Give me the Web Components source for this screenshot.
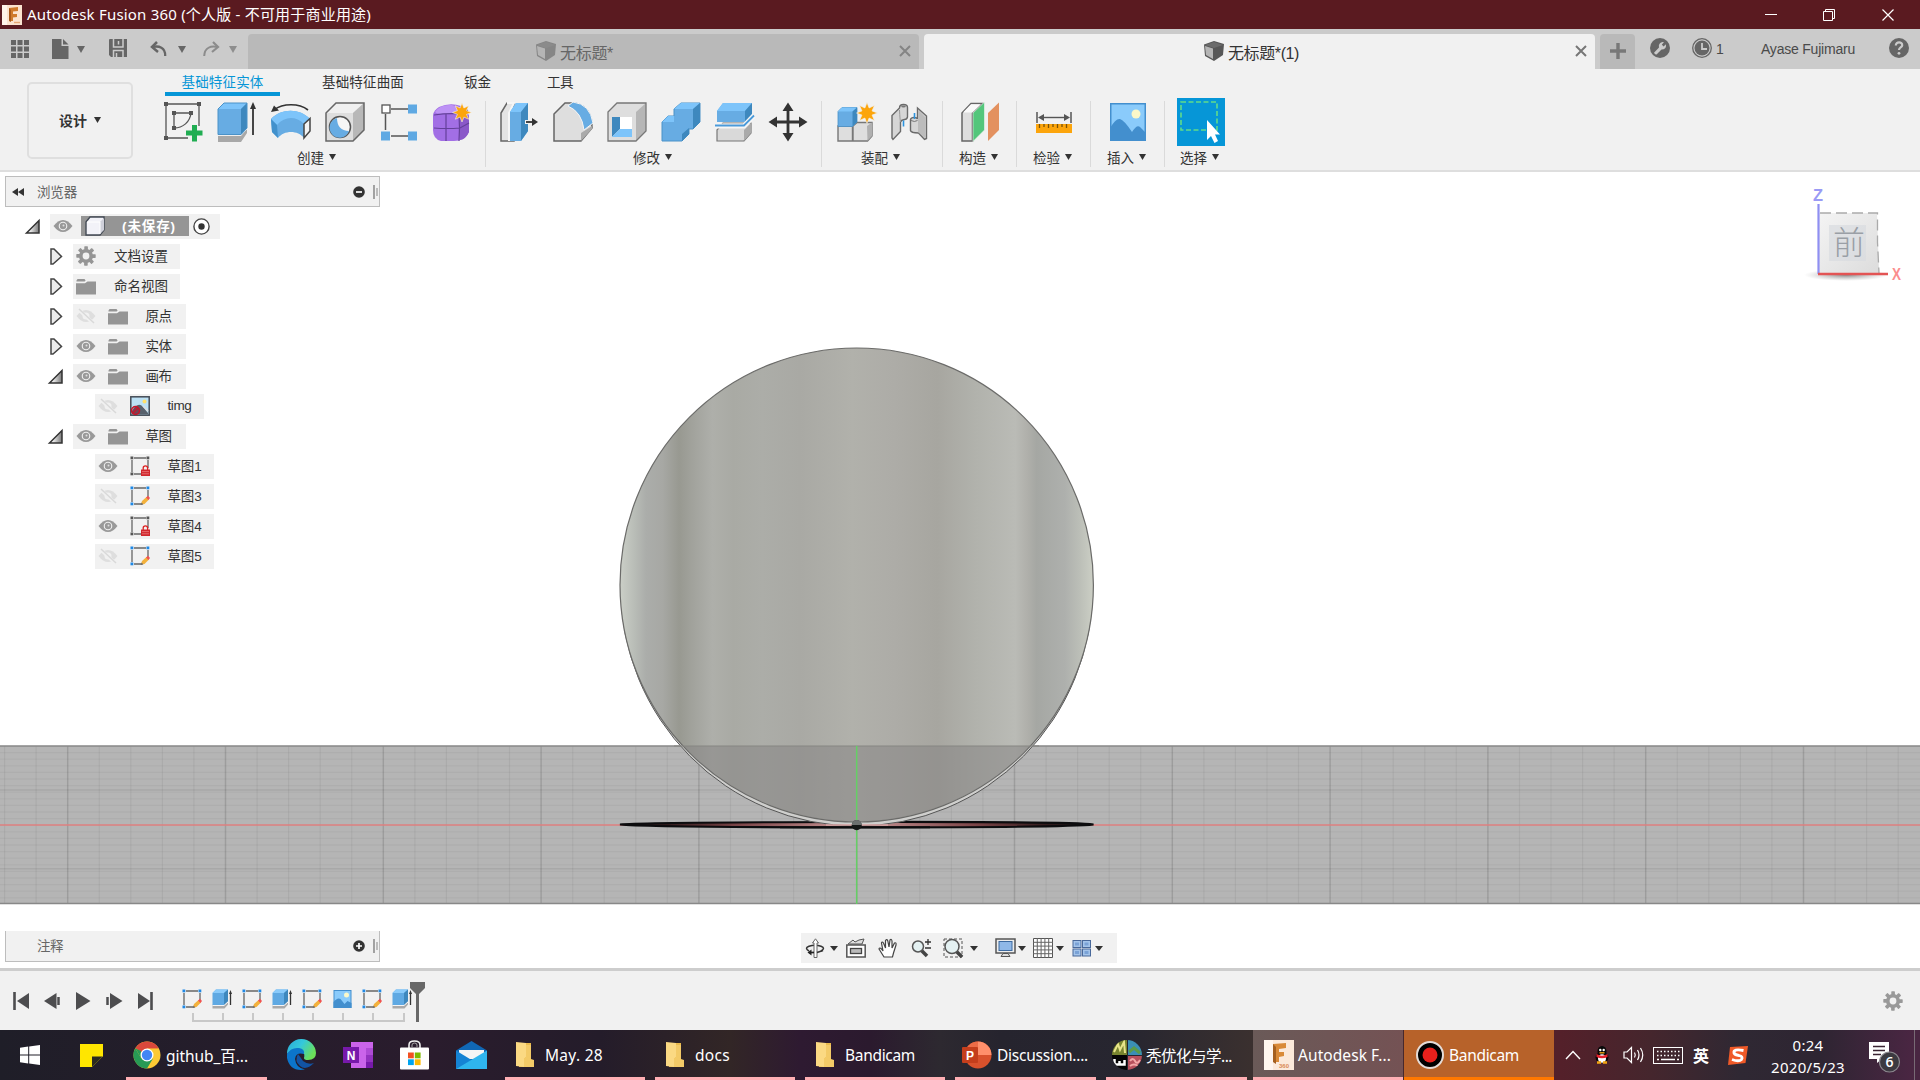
<!DOCTYPE html>
<html lang="zh-CN">
<head>
<meta charset="utf-8">
<title>Autodesk Fusion 360</title>
<style>
html,body{margin:0;padding:0;width:1920px;height:1080px;overflow:hidden;background:#fff}
body{font-family:"Liberation Sans","Noto Sans CJK SC",sans-serif;font-size:14px;color:#333}
</style>
</head>
<body>
<fusion-app></fusion-app>
<script>
const K='#333', G='#666';
const sketch=(c,extra)=>`<path d="M4 2H16M2 4V16M4 18H11M18 4V12" stroke="#666" stroke-width="1.300" fill="none"/><g fill="${c}"><rect x="0.500" y="0.500" width="2.800" height="2.800"/><rect x="16.500" y="0.500" width="2.800" height="2.800"/><rect x="0.500" y="16.500" width="2.800" height="2.800"/></g>${extra}`;
const pencil='<path d="M11 18.500L12 15L16.500 11L19 13.500L14.500 18Z" fill="#f3b13c"/><path d="M16 11.400L18 9.800L20 12L18.400 13.900Z" fill="#f05252"/><path d="M10.600 19L11.600 16.600L13.400 18.400Z" fill="#666"/>';
const lock='<path d="M13.200 14v-2a2.200 2.200 0 0 1 4.400 0v2" fill="none" stroke="#d22" stroke-width="1.300"/><rect x="11" y="13.500" width="9" height="6.500" fill="#d0282e"/><path d="M12 15.600h7M12 17.800h7" stroke="#e88" stroke-width="0.700"/>';
const gear=(c,hole)=>{let t='';for(let i=0;i<8;i++)t+=`<rect x="8.300" y="0.300" width="3.600" height="5" rx="0.600" transform="rotate(${i*45} 10 10)"/>`;return `<g fill="${c}">${t}<circle cx="10" cy="10" r="7"/></g><circle cx="10" cy="10" r="3.400" fill="${hole}"/>`};
const star=(x,y,s)=>{let p='';for(let i=0;i<16;i++){const r=i%2?s*.52:s,a=i*Math.PI/8-Math.PI/2;p+=(x+r*Math.cos(a)).toFixed(2)+','+(y+r*Math.sin(a)).toFixed(2)+' '}return `<polygon points="${p}" fill="#fca50c" stroke="#f2f2f2" stroke-width=".6"/>`};
const folder='<path d="M0 5.200H9L11.500 3.600H20V16.500H0Z" fill="#959595"/><path d="M0.500 2.600L1.500 1H8.500L9.600 2.600L8.600 3.600H0.500Z" fill="#959595"/>';
const ICON={
 app:[20,20,`<rect width="20" height="20" fill="#fbe3cf"/><rect x="0" y="0" width="5" height="20" fill="#fff4ea"/><path d="M7 3L16 2V6L11 6.500V9H15V12L11 12.500V16H7Z" fill="#cf7a2c"/><path d="M7 3L9 5V17L7 16Z" fill="#a8591a"/><path d="M12 17.500h6" stroke="#e6a673" stroke-width="1.400"/>`],
 apps:[18,18,[0,1,2].map(i=>[0,1,2].map(j=>`<rect x="${i*6.5}" y="${j*6.5}" width="5" height="5" fill="${G}"/>`).join('')).join('')],
 file:[17,20,`<path d="M0 0H9.500V7H16.500V20H0Z" fill="${G}"/><path d="M11 0L16.500 5.500H11Z" fill="${G}"/>`],
 save:[18,18,`<path d="M0 1Q0 0 1 0H18V18H2L0 16Z" fill="${G}"/><path d="M4.500 0V8H14V0M9.500 2V5.500M4.500 18V11.500H14V18M7.500 14V18" fill="none" stroke="#cbcbcb" stroke-width="1.500"/>`],
 undo:[18,16,`<path d="M2.500 6C9 4.500 15.500 6.500 15.200 15" fill="none" stroke="${G}" stroke-width="2.300"/><path d="M7 1L2 6L8 11" fill="none" stroke="${G}" stroke-width="2.500"/>`],
 redo:[18,16,`<path d="M15.500 6C9 4.500 2.500 6.500 2.200 15" fill="none" stroke="#8c8c8c" stroke-width="2"/><path d="M11 1L16 6L10 11" fill="none" stroke="#8c8c8c" stroke-width="2.200"/>`],
 caret:[8,7,`<path d="M0 0H8L4 7Z" fill="${G}"/>`],
 caretd:[7,6,`<path d="M0 0H7L3.500 6Z" fill="${K}"/>`],
 caretn:[8,5,`<path d="M0 0H8L4 5Z" fill="${K}"/>`],
 cubed:[20,20,`<path d="M0 3.500L10 0L20 3L19 14L10 20L1 15Z" fill="#575757"/><path d="M1 5L9 7.500V18L2 14Z" fill="#b5b5b5"/><path d="M1 4L10 1L19 4L10 7Z" fill="#6c6c6c"/>`],
 cubel:[20,20,`<path d="M0 3.500L10 0L20 3L19 14L10 20L1 15Z" fill="#868686"/><path d="M1 5L9 7.500V18L2 14Z" fill="#b5b5b5"/><path d="M1 4L10 1L19 4L10 7Z" fill="#8b8b8b"/>`],
 x:[12,12,'<path d="M1 1L11 11M11 1L1 11" stroke="#777" stroke-width="2"/>'],
 plus:[18,18,'<path d="M9 1V17M1 9H17" stroke="#787878" stroke-width="3.400"/>'],
 min:[12,12,'<path d="M0 5.500H12" stroke="#fff"/>'],
 restore:[12,12,'<path d="M.5 2.500H9.500V11.500H.5ZM2.500 2.500V.5H11.500V9.500H9.500" stroke="#fff" fill="none"/>'],
 close:[12,12,'<path d="M.5 .5L11.500 11.500M11.500 .5L.5 11.500" stroke="#fff" stroke-width="1.200"/>'],
 wrench:[20,20,'<circle cx="10" cy="10" r="10" fill="#666"/><path d="M4 14.800L9 9.500Q8 5 12.500 4L14 4.200L11.800 6.600L13.500 8.400L16 6.300Q16.500 11.500 11.500 11.500L6.500 16.500Q5 17 4 14.800Z" fill="#cbcbcb"/>'],
 clock:[20,20,'<circle cx="10" cy="10" r="9.300" fill="none" stroke="#666" stroke-width="1.300"/><circle cx="10" cy="10" r="7.500" fill="#666"/><path d="M10 5V11H15" stroke="#cbcbcb" stroke-width="1.800" fill="none"/>'],
 help:[20,20,'<circle cx="10" cy="10" r="10" fill="#666"/><path d="M6.800 7.500C6.800 3.200 13.500 3.500 13.200 7.300C13 9.500 10 9.500 10 12" fill="none" stroke="#cbcbcb" stroke-width="2.200"/><circle cx="10" cy="15.300" r="1.400" fill="#cbcbcb"/>'],
 csketch:[40,40,'<path d="M2 2H35M2 2V36M2 36H24M35 2V24" stroke="#555" stroke-width="1.300" fill="none"/><path d="M10 11H27M10 11V26C19 26 26 20 27 11" stroke="#555" stroke-width="1.300" fill="none"/><g fill="#555"><rect x="0" y="0" width="4" height="4"/><rect x="33" y="0" width="4" height="4"/><rect x="0" y="34" width="4" height="4"/><rect x="8" y="9" width="4" height="4"/><rect x="25" y="9" width="4" height="4"/><rect x="8" y="24" width="4" height="4"/></g><path d="M28 23H33V28.500H38.500V33.500H33V39.500H28V33.500H22V28.500H28Z" fill="#20ad52"/>'],
 extrude:[40,40,'<path d="M1 34H24L30 27V31L24 40H1Z" fill="#a8a8a8"/><path d="M1 33H24L30 27" stroke="#eee" fill="none"/><path d="M1 7L7 1H30V26L24 32.500H1Z" fill="#67ace3"/><path d="M7 1H30L24 7H1Z" fill="#7dc4fa"/><path d="M24 7L30 1V26L24 32.500Z" fill="#3e88be"/><path d="M1 7L7 1H30V26L24 32.500H1Z" fill="none" stroke="#4a92c8" stroke-width="1"/><path d="M36 33V5" stroke="#333" stroke-width="1.800"/><path d="M36 0L39 7H33Z" fill="#333"/>'],
 revolve:[40,40,'<path d="M0 17C10 6 29 6 39 17L33 36C27 28 13 28 7 36L1 30Z" fill="#67ace3"/><path d="M0 17C10 6 29 6 39 17L33 22C25 14 14 14 6 23Z" fill="#7dc4fa"/><path d="M0 17L6 23L7 36L1 30Z" fill="#4291cc"/><path d="M33 22L39 16.500V29L33 36Z" fill="#f4f4f4" stroke="#444" stroke-width="1.500"/><path d="M37 8C28 1 12 1 3 8" stroke="#333" fill="none" stroke-width="1.600"/><path d="M0 10L3 3.500L8 8.500Z" fill="#333"/>'],
 hole:[40,40,'<path d="M1 11L11 1H39V28L28 39H1Z" fill="#dedede"/><path d="M1 11L11 1H39L28 11Z" fill="#f0f0f0"/><path d="M28 11L39 1V28L28 39Z" fill="#b8b8b8"/><path d="M1 11L11 1H39V28L28 39H1Z" fill="none" stroke="#666" stroke-width="1.500"/><circle cx="15" cy="25" r="10.500" fill="#f6f6f6" stroke="#555" stroke-width="1.500"/><path d="M12 16C12 24 16 29 24 29A10 10 0 1 1 12 16Z" fill="#67ace3"/>'],
 pattern:[36,40,'<path d="M10 7H27M4.500 12V28M10 34H27" stroke="#555" stroke-width="1.500"/><rect x="1" y="3" width="8" height="8" fill="#fff" stroke="#555" stroke-width="1.300"/><g fill="#5fa9e3"><rect x="27" y="2.500" width="9" height="9"/><rect x="0" y="29.500" width="9" height="9"/><rect x="27" y="29.500" width="9" height="9"/></g>'],
 form:[40,40,'<path d="M7 5Q18 0 29 4L37 13V30Q33 39 22 39H9Q1 37 1 28V13Q2 8 7 5Z" fill="#a26fe5"/><path d="M3 10Q8 2 20 3L32 7Q25 13 12 12Q5 12 3 10Z" fill="#bd92f5"/><path d="M27 13Q36 11 37 16V30Q34 37 28 38Z" fill="#8a58c9"/><path d="M2 26Q15 27 28 26L37 21M14 12V39M27 12Q28 26 27 39M2 13Q16 11 28 12L36 8" stroke="#64409a" stroke-width="1.200" fill="none"/>'+star(30,10.5,9.5)],
 press:[40,40,'<path d="M1 11L7 1H14V39H1Z" fill="#e4e4e4" stroke="#666" stroke-width="1.500"/><path d="M7 1L14 1L9 11V39" stroke="#f6f6f6" stroke-width="2" fill="none"/><path d="M10 10L16 1H28V29L21 39H10Z" fill="#67ace3"/><path d="M10 10L16 1H28L21 10Z" fill="#7dc4fa"/><path d="M21 10L28 1V29L21 39Z" fill="#3e88be"/><path d="M25 20H35" stroke="#f2f2f2" stroke-width="4"/><path d="M26 20H34" stroke="#333" stroke-width="1.800"/><path d="M32 16L38 20L32 24Z" fill="#333"/>'],
 fillet:[40,40,'<path d="M1 12L12 1H21Q39 4 39 26L28 39H1Z" fill="#dedede" stroke="#666" stroke-width="1.500"/><path d="M28 31L39 24V27L28 39Z" fill="#aaa"/><path d="M15 4L20 0Q37 2 40 21L31 28Q29 10 15 4Z" fill="#67ace3" stroke="#f4f4f4"/>'],
 shell:[40,40,'<path d="M1 10L10 1H39V29L29 39H1Z" fill="#dedede"/><path d="M29 10L39 1V29L29 39Z" fill="#b6b6b6"/><path d="M1 10L10 1H39V29L29 39H1Z" fill="none" stroke="#777" stroke-width="1.300"/><rect x="5" y="15" width="20" height="20" fill="#fff"/><path d="M5 15H13V27L5 35Z" fill="#3e88be"/><path d="M5 35L13 27H25V35Z" fill="#7dc4fa"/>'],
 combine:[40,40,'<path d="M13 7L20 1H39V20L32 27H28V32L21 39H1V20L7 14H13Z" fill="#67ace3" stroke="#4a92c8"/><path d="M13 7L20 1H39L32 7ZM1 20L7 14H13V20Z" fill="#7dc4fa"/><path d="M32 7L39 1V20L32 27ZM21 32L28 26V32L21 39Z" fill="#3e88be"/>'],
 split:[40,40,'<path d="M2 28L8 21H36V31L29 39H2Z" fill="#d9d9d9" stroke="#777" stroke-width="1.200"/><path d="M29 28L36 21V31L29 39Z" fill="#aaa"/><path d="M2 9L8 1H37V13L30 20H2Z" fill="#67ace3"/><path d="M2 9L8 1H37L30 9Z" fill="#7dc4fa"/><path d="M30 9L37 1V13L30 20Z" fill="#3e88be"/><path d="M0 24H29L39 13.500" stroke="#f6f6f6" stroke-width="5" fill="none"/><path d="M0 23.500H29L39 13.500" stroke="#4a9ada" stroke-width="1.800" fill="none"/>'],
 move:[40,40,'<path d="M20 5V35M5 20H35" stroke="#333" stroke-width="2.800"/><path d="M20 .5L25.500 9H14.500ZM20 39.500L25.500 31H14.500ZM.5 20L9 14.500V25.500ZM39.500 20L31 14.500V25.500Z" fill="#333"/>'],
 assemble:[42,40,'<path d="M4 24H18.500V39H4ZM19 24L23 20.500H38V34L33.500 39H19Z" fill="#dedede" stroke="#777" stroke-width="1.400"/><path d="M33 24L38 20.500V34L33.500 39Z" fill="#b0b0b0"/><path d="M4 9.500L8 5.500H23V20L18.500 24.500H4Z" fill="#67ace3" stroke="#4a92c8" stroke-width=".8"/><path d="M4 9.500L8 5.500H23L18.500 9.500Z" fill="#7dc4fa"/><path d="M18.500 9.500L23 5.500V20L18.500 24.500Z" fill="#3e88be"/>'+star(33,11,10.5)],
 joint:[38,40,'<path d="M2 13.500L9.500 6Q9.500 2.500 13.500 2.500T17.500 5.500V15Q17 17.500 14.500 17.500Q11 18 10.500 20V29.500L3 37.500L2 36Z" fill="#d6d6d6" stroke="#6a6a6a" stroke-width="1.400"/><path d="M9.500 8Q10 18 10.500 20" fill="none" stroke="#999"/><ellipse cx="13.500" cy="4.500" rx="2.300" ry="1" fill="#777"/><path d="M13.500 18.500V24.500" stroke="#2c93de" stroke-width="1.600"/><path d="M27.500 6L36.500 14V36.500L34.500 37.500L28.500 31Q21 31 20.500 28.500V17.500Q21 15.500 24 15.500T27.500 17Z" fill="#d6d6d6" stroke="#6a6a6a" stroke-width="1.400"/><path d="M28 7.500L35 15V36L28 30Z" fill="#bcbcbc"/><path d="M21 18.500Q24.500 20.500 27.500 18.500" fill="none" stroke="#777"/><path d="M24.500 11V17" stroke="#2c93de" stroke-width="1.600"/>'],
 construct:[40,40,'<path d="M2 11L11 1.500H22L12.500 11V39H2Z" fill="#dedede" stroke="#666" stroke-width="1.500"/><path d="M3 10.500L11 2.200H21L12.500 10.500Z" fill="#fafafa"/><path d="M13 11L24.500 0V28L13 39.500Z" fill="#53c67b" stroke="#f4f4f4" stroke-width=".6"/><path d="M28 11L39 .5V28L28 39Z" fill="#e3915f"/>'],
 inspect:[36,40,'<path d="M1 10V21M35 10V21" stroke="#555" stroke-width="1.500"/><path d="M4 15.500H32" stroke="#555" stroke-width="1.400"/><path d="M2 15.500L8 12V19ZM34 15.500L28 12V19Z" fill="#555"/><rect x="0" y="22" width="36" height="9" fill="#fca50c"/><path d="M3.500 22v4M8 22v3M12.500 22v4M17 22v3M21.500 22v4M26 22v3M30.500 22v4" stroke="#7a5208" stroke-width="1.300"/>'],
 insert:[36,38,'<rect width="36" height="38" fill="#438fce"/><rect x="1.500" y="1.500" width="33" height="35" fill="#8acbfb"/><path d="M0 25Q6 15 10 16Q14 17 22 29Q27 21 30 24L36 30V38H0Z" fill="#438fce"/><circle cx="26" cy="11" r="4.500" fill="#fbf8c9"/>'],
 select:[48,48,'<rect width="48" height="48" fill="#0696d7"/><rect x="4" y="4" width="36" height="28" fill="none" stroke="#61dc8a" stroke-width="1.600" stroke-dasharray="5 2.500"/><path d="M30 22V42L34 38L37.500 45L41 43L38 36.500H43Z" fill="#fff"/>'],
 rew:[12,8,`<path d="M6 0V8L0 4ZM12 0V8L6 4Z" fill="${K}"/>`],
 minusc:[12,12,'<circle cx="6" cy="6" r="5.800" fill="#333"/><path d="M3 6H9" stroke="#fff" stroke-width="1.700"/>'],
 plusc:[12,12,'<circle cx="6" cy="6" r="5.800" fill="#333"/><path d="M3 6H9M6 3V9" stroke="#fff" stroke-width="1.700"/>'],
 grip:[5,14,'<path d="M1 0V14" stroke="#777" stroke-width="1.300"/><path d="M4 3V11" stroke="#999" stroke-width="1.200"/>'],
 open:[15,15,'<defs><linearGradient id="g"><stop offset=".3" stop-color="#eee"/><stop offset="1" stop-color="#777"/></linearGradient></defs><path d="M1.500 14L14 1.500V14Z" fill="url(#g)" stroke="#333" stroke-width="1.500"/>'],
 shut:[13,17,'<path d="M1 1V16H3L11.500 8.500L4 1Z" fill="#ececec" stroke="#444" stroke-width="1.500"/>'],
 eye:[20,14,'<path d="M.5 7Q5 1 10 1T19.500 7Q15 13 10 13T.5 7Z" fill="#999"/><circle cx="10" cy="7" r="4.300" fill="#f1f1f1"/><circle cx="10" cy="7" r="3.200" fill="#999"/><circle cx="10.500" cy="6.500" r="1" fill="#ddd"/>'],
 eyeoff:[20,16,'<path d="M.5 8Q5 2 10 2T19.500 8Q15 14 10 14T.5 8Z" fill="#dedede"/><circle cx="10" cy="8" r="3.500" fill="#f1f1f1"/><path d="M1 0L18 16" stroke="#f1f1f1" stroke-width="3.500"/><path d="M3 1L18 15" stroke="#d9d9d9" stroke-width="1.500"/>'],
 body:[20,20,'<path d="M1 6L5 1H19V14L15 19H1Z" fill="#f2f2f8" stroke="#444b55" stroke-width="1.400"/><path d="M15 6L19 2V14L15 18Z" fill="#cfd0da"/><path d="M2 6H15V18" fill="none" stroke="#fff"/>'],
 target:[17,17,'<circle cx="8.500" cy="8.500" r="7.600" fill="#fff" stroke="#444" stroke-width="1.400"/><circle cx="8.500" cy="8.500" r="3.200" fill="#333"/>'],
 gear:[20,20,gear('#959595','#f1f1f1')], gear2:[20,20,gear('#999','#f1f1f1')],
 folder:[20,17,folder],
 pic:[20,20,'<rect x=".8" y=".8" width="18.400" height="18.400" fill="#bce1f5" stroke="#444b55" stroke-width="1.500"/><path d="M2 15Q8 5 13 11L18 17V18.500H2Z" fill="#57616c"/><path d="M13 10L18 15" stroke="#ddd" stroke-width="1.500"/><circle cx="14.500" cy="5.500" r="2" fill="#ffe06a"/><circle cx="5.500" cy="14.500" r="4" fill="#b02" fill-opacity=".3" stroke="#c81428" stroke-width="1.500"/><path d="M3 17L8 12" stroke="#c81428" stroke-width="1.300"/>'],
 sklock:[20,20,sketch('#555',lock)], sk:[20,20,sketch('#1e88e5',pencil)],
 tex:[20,20,'<path d="M.5 15.500H12L16 12V15.500L12.500 19.500H.5Z" fill="#aaa"/><path d="M.5 4L4 .5H16V12L12 16H.5Z" fill="#5fa9e3"/><path d="M4 .5H16L12 4H.5Z" fill="#8acbfb"/><path d="M12 4L16 .5V12L12 16Z" fill="#3e88be"/><path d="M.5 16.500H12L16 13" stroke="#f5f5f5" fill="none"/><path d="M18.500 4V16" stroke="#333" stroke-width="1.300"/><path d="M18.500 1L20 5H17Z" fill="#333"/>'],
 tpic:[20,18,'<g transform="translate(1.500 0)"><rect width="18" height="18" fill="#438fce"/><rect x="1" y="1" width="16" height="16" fill="#8acbfb"/><path d="M0 12Q4 7 7 9L11 14L14 11L18 13V18H0Z" fill="#438fce"/><circle cx="13" cy="5" r="2.500" fill="#fbf8c9"/></g>'],
 p1:[17,20,'<path d="M1.500 1V19" stroke="#4d4d4f" stroke-width="2.600"/><path d="M16 2V18L4 10Z" fill="#4d4d4f"/>'],
 p2:[17,20,'<path d="M12.500 2V18L0 10Z" fill="#4d4d4f"/><path d="M14.500 6V14" stroke="#4d4d4f" stroke-width="2.500"/>'],
 p3:[17,20,'<path d="M1 1V19L15.500 10Z" fill="#4d4d4f"/>'],
 p4:[17,20,'<path d="M4 2V18L16.500 10Z" fill="#4d4d4f"/><path d="M1.500 6V14" stroke="#4d4d4f" stroke-width="2.500"/>'],
 p5:[17,20,'<path d="M1 2V18L13 10Z" fill="#4d4d4f"/><path d="M14.500 1V19" stroke="#4d4d4f" stroke-width="2.600"/>'],
 orbit:[21,20,'<path d="M4 13Q-1 10 4 8.200Q10 6.500 16 8.200Q21 10 16 13" fill="none" stroke="#333" stroke-width="1.500"/><path d="M9 19.500V5H7.500L10.500 .8L13.500 5H12V19.500Z" fill="#fff" stroke="#666"/><path d="M9 14.500H4" stroke="#222" stroke-width="1.700"/><path d="M6.500 11.500L2.500 14.500L6.500 17.500Z" fill="#222"/><path d="M12 14.500L18 12.500" stroke="#333" stroke-width="1.500"/>'],
 look:[20,20,'<path d="M2 6L7 2L9 4L13 2L18 1L16 6Z" fill="#ddd" stroke="#555"/><rect x=".8" y="7" width="18.400" height="12" fill="#fff" stroke="#555" stroke-width="1.500"/><rect x="4.500" y="10.500" width="11" height="5" fill="#bbb" stroke="#444" stroke-width="1.300"/>'],
 hand:[20,20,'<path d="M6 19L1 11Q1.500 9 3.500 11L5 13L3.500 5Q4 3 5.500 5L7.500 10L7.500 2.500Q9 .5 9.800 3L11 9L12 2Q13.500 .5 14 3V10L16.500 5Q18.500 4 18 7L15.500 15L14.500 19Z" fill="#fff" stroke="#444" stroke-width="1.200"/>'],
 zoom:[20,20,'<path d="M10 12L16 18" stroke="#444" stroke-width="3.500"/><circle cx="7" cy="8.500" r="5.500" fill="#e4f1f2" stroke="#555" stroke-width="1.500"/><path d="M17 1V7M14 4H20M14 10H20" stroke="#333" stroke-width="1.300"/>'],
 fit:[20,20,'<rect x="1" y="1" width="18" height="18" fill="none" stroke="#555" stroke-dasharray="3 2"/><path d="M13 13L19 19" stroke="#444" stroke-width="3.500"/><circle cx="9" cy="8.500" r="7" fill="#e4f1f2" stroke="#555" stroke-width="1.500"/>'],
 disp:[21,20,'<rect x="1" y="1" width="19" height="14" fill="#eee" stroke="#555" stroke-width="1.500"/><rect x="4" y="3.500" width="13" height="9" fill="#8fb8e8" stroke="#3d6aa0"/><path d="M6 18.500H15L13 15.500H8Z" fill="#ddd" stroke="#555"/>'],
 gridi:[20,20,'<path d="M.5 .5H19.500V19.500H.5Z" fill="#fff" stroke="#555"/><path d="M4.300 0V20M8.100 0V20M11.900 0V20M15.700 0V20M0 4.300H20M0 8.100H20M0 11.900H20M0 15.700H20" stroke="#666"/>'],
 views:[20,18,'<g fill="#a4c4ea" stroke="#48689a"><rect x="1" y="1.500" width="8" height="7"/><rect x="10.500" y="1.500" width="8" height="7"/><rect x="1" y="10" width="8" height="7"/><rect x="10.500" y="10" width="8" height="7"/></g><g fill="#7aa2d6"><rect x="3" y="3.500" width="4" height="3"/><rect x="12.500" y="3.500" width="4" height="3"/><rect x="3" y="12" width="4" height="3"/><rect x="12.500" y="12" width="4" height="3"/></g>'],
 win:[20,20,'<path d="M0 2.800L8.200 1.600V9.500H0ZM9.200 1.500L20 0V9.500H9.200ZM0 10.500H8.200V18.400L0 17.200ZM9.200 10.500H20V20L9.200 18.500Z" fill="#fff"/>'],
 sticky:[23,23,'<path d="M0 0H23V12L12 23H0Z" fill="#ffe600"/><path d="M12 12H23L12 23Z" fill="#2a2a20"/><path d="M12 12H23" stroke="#ffe600"/>'],
 chrome:[28,28,'<circle cx="14" cy="14" r="13.500" fill="#fcc934"/><path d="M14 14L2.300 7.200A13.500 13.500 0 0 1 25.700 7.200L14 7.200Z" fill="#d9483b"/><path d="M2.300 7.200A13.500 13.500 0 0 0 14 27.500L20 17.500L14 20L8 17Z" fill="#279a55"/><path d="M2.300 7.200L8 17V10Z" fill="#279a55"/><path d="M25.700 7.200H14V5Z" fill="#d9483b"/><circle cx="14" cy="14" r="6.500" fill="#fff"/><circle cx="14" cy="14" r="5.200" fill="#4285f4"/>'],
 edge:[30,30,'<defs><linearGradient id="e1" x1="0" y1="0" x2="1" y2=".5"><stop offset="0" stop-color="#2aa9d8"/><stop offset=".5" stop-color="#34c8dc"/><stop offset="1" stop-color="#6be058"/></linearGradient></defs><path d="M1 14A14.500 14.500 0 0 1 30 13Q30 20 22 20Q18 20 18 18Q19 14 17 12Q9 7 1 14Z" fill="url(#e1)"/><path d="M1 14Q5 7 13 8Q19 9 18 14Q10 12 9 19Q10 28 19 29.500Q4 32 1 18Z" fill="#0c75cb"/><path d="M12 14Q8 21 14 26Q20 31 28 23Q22 25 17 21Q15 18 12 14Z" fill="#1253a4"/>'],
 note:[30,28,'<rect x="8" y="1" width="22" height="26" fill="#ca64ea"/><rect x="23" y="7" width="7" height="7" fill="#ae4bd5"/><rect x="23" y="14" width="7" height="7" fill="#9332bf"/><rect x="23" y="21" width="7" height="6" fill="#7719aa"/><rect x="0" y="6" width="16" height="16" fill="#7719aa"/><text x="8" y="18.500" text-anchor="middle" font-family="Liberation Sans,sans-serif" font-weight="bold" font-size="12" fill="#fff">N</text>'],
 store:[29,30,'<path d="M9 8V5Q9 1 14.500 1T20 5V8" fill="none" stroke="#eee" stroke-width="1.600"/><path d="M12 7V5Q12 3 14.500 3T17 5V7" fill="none" stroke="#aaa"/><rect y="7.500" width="29" height="22" rx="1" fill="#fff"/><rect x="8" y="12.500" width="5.800" height="5.800" fill="#f25022"/><rect x="14.800" y="12.500" width="5.800" height="5.800" fill="#7fba00"/><rect x="8" y="19.300" width="5.800" height="5.800" fill="#00a4ef"/><rect x="14.800" y="19.300" width="5.800" height="5.800" fill="#ffb900"/>'],
 mail:[31,28,'<path d="M0 9.500L15.500 0L31 9.500V28H0Z" fill="#1067b4"/><path d="M3 9H28V18H3Z" fill="#f5f5f5"/><path d="M0 9.500L15.500 19L0 28Z" fill="#1583d4"/><path d="M0 28L31 9.500V28Z" fill="#2fb5ee"/>'],
 fold:[18,26,'<path d="M3 1H15V25H3Z" fill="#e9b94b"/><path d="M0 0L10 1V15L8 17V25L0 24Z" fill="#fbd983"/><path d="M10 3H15V17L18 18V25H8V17L10 15Z" fill="#f3ca67"/>'],
 ppt:[30,28,'<circle cx="16" cy="14" r="13.500" fill="#d9512c"/><path d="M16 .5A13.500 13.500 0 0 1 29.500 14H16Z" fill="#ff8f6b"/><path d="M2.500 14A13.500 13.500 0 0 1 16 .5V14Z" fill="#ed6c47"/><rect x="0" y="6" width="16" height="16" rx="1" fill="#c43e1c"/><text x="8" y="18.500" text-anchor="middle" font-family="Liberation Sans,sans-serif" font-weight="bold" font-size="12" fill="#fff">P</text>'],
 quad:[30,30,'<defs><clipPath id="q"><circle cx="15" cy="15" r="15"/></clipPath></defs><g clip-path="url(#q)"><rect width="15" height="15" fill="#78852f"/><rect x="16" width="14" height="15" fill="#3b8fb5"/><rect y="15" width="15" height="15" fill="#050505"/><rect x="16" y="16" width="14" height="14" fill="#b8505c"/><path d="M2 12L6 4L8 10L12 2L13 13" stroke="#e8e48a" stroke-width="2" fill="none"/><path d="M17 12L22 8L28 13" stroke="#5b9b4a" stroke-width="3" fill="none"/><path d="M2.500 19V24.500H7.500V21M7.500 24.500H12.500V20" stroke="#fff" stroke-width="2.500" fill="none"/><path d="M18 21q3-4 5 0t5-1M18 26q4-3 8 0" stroke="#f4a6a6" stroke-width="2" fill="none"/></g>'],
 f360:[30,30,'<rect width="30" height="30" fill="#fbe9da"/><rect width="9" height="30" fill="#fff6ee"/><path d="M9 4L22 3V8L15 9V12H20V16L15 17V22H9Z" fill="#d98a37"/><path d="M9 4L12 7V24L9 22Z" fill="#a5601f"/><text x="20" y="28" text-anchor="middle" font-family="Liberation Sans,sans-serif" font-weight="bold" font-size="6" fill="#d98a55">360</text>'],
 rec:[28,28,'<circle cx="14" cy="14" r="13" fill="#000" stroke="#e4dcd8" stroke-width="2"/><circle cx="14" cy="14" r="7.500" fill="#e8201c"/>'],
 up:[16,10,'<path d="M1 9L8 1.500L15 9" stroke="#fff" stroke-width="1.400" fill="none"/>'],
 qq:[14,18,'<ellipse cx="7" cy="5.500" rx="4.500" ry="5.500" fill="#080808"/><ellipse cx="7" cy="11.500" rx="6.500" ry="5.500" fill="#080808"/><ellipse cx="7" cy="12.500" rx="4" ry="4.300" fill="#fff"/><path d="M1.500 8Q7 11.500 12.500 8V11Q7 13.500 1.500 11Z" fill="#e6202c"/><path d="M2 16.500H6M8 16.500H12" stroke="#f5a613" stroke-width="2.500"/><circle cx="5.300" cy="4" r="1.200" fill="#fff"/><circle cx="8.700" cy="4" r="1.200" fill="#fff"/><path d="M4.500 6.800H9.500" stroke="#f5a613" stroke-width="1.400"/>'],
 spk:[21,18,'<path d="M1 6H4L8.500 1.500V16.500L4 12H1Z" fill="none" stroke="#fff" stroke-width="1.200"/><path d="M11.500 6.500Q13 9 11.500 11.500M14.500 4Q17.500 9 14.500 14M17.500 2Q22 9 17.500 16" stroke="#fff" stroke-width="1.200" fill="none"/>'],
 kbd:[30,17,'<rect x=".5" y=".5" width="29" height="16" fill="none" stroke="#fff"/><path d="M4 4.500H27M4 8.500H27" stroke="#fff" stroke-width="1.500" stroke-dasharray="1.500 2"/><path d="M4 12.500H6M8 12.500H22M24 12.500H26" stroke="#fff" stroke-width="1.500"/>'],
 sogou:[20,19,'<path d="M2 1L20 0L17.500 17L0 19Z" fill="#f05a28"/><path d="M15.500 4.500Q5 2.500 6 7Q7 9 11 9.500Q15.500 10.500 13.500 13.500Q11 16 4 13.500" fill="none" stroke="#fff" stroke-width="2.800"/>'],
 notif:[32,33,'<path d="M0 0H20V17H13L8 21V17H0Z" fill="#fff"/><path d="M4 4.500H16M4 8.500H16M4 12.500H12" stroke="#3a2433" stroke-width="1.300"/><circle cx="20.500" cy="20" r="10" fill="#3c3a41" stroke="#8c898f" stroke-width="1.200"/><text x="20.500" y="25" text-anchor="middle" font-family="Open Sans,sans-serif" font-weight="600" font-size="14" fill="#fff">6</text>']
};
const def=(n,css,html,setup)=>customElements.define(n,class extends HTMLElement{
 constructor(){super();this.attachShadow({mode:'open'})}
 connectedCallback(){if(this.done)return;this.done=1;
  this.shadowRoot.innerHTML=`<style>*{box-sizing:border-box}${css}</style>`+(typeof html=='function'?html(this):html);
  if(setup)setup(this)}
});
const ic=(n,st='')=>`<fx-icon name="${n}" style="${st}"></fx-icon>`;
const tx=(t,w,st='')=>`<fit-text w="${w}" style="${st}">${t}</fit-text>`;
const ml=n=>`margin-left:${n}px;`;
const UP='padding-bottom:2px;';

def('fx-icon',':host{display:block;flex:none}svg{display:block;overflow:visible}',e=>{const[w,h,m]=ICON[e.getAttribute('name')];return `<svg width="${w}" height="${h}" viewBox="0 0 ${w} ${h}">${m}</svg>`});

def('title-bar',':host{display:flex;flex:none;height:29px;background:#5a1a20;color:#fff;align-items:center;padding:0 26px 0 2px;font:15px "Noto Sans","Noto Sans CJK SC",sans-serif}.g{flex:1}',
 ic('app')+tx('Autodesk Fusion 360 (个人版 - 不可用于商业用途)',344,ml(5)+UP)+'<span class="g"></span>'+ic('min')+ic('restore',ml(46))+ic('close',ml(47)));

def('doc-tab',':host{display:flex;height:35px;box-sizing:border-box;flex:none;align-items:center;margin-top:5px;background:#b9b9b9;color:#666;border-radius:4px 4px 0 0;font-size:16px;padding-top:1px}:host([active]){background:#f1f1f1;color:#333}','<slot></slot>');

def('quick-bar',':host{display:flex;flex:none;height:40px;background:#cbcbcb;align-items:flex-start}.q{display:flex;align-items:center;width:248px;height:40px;padding-left:11px}.p{display:flex;width:35px;height:35px;background:#b9b9b9;margin:5px 0 0 5px;border-radius:4px 4px 0 0;align-items:center;justify-content:center}.r{display:flex;align-items:center;height:40px;color:#4a4a4a;font-size:14px}',
 `<div class="q">${ic('apps')}${ic('file',ml(23))}${ic('caret',ml(8))}${ic('save',ml(24)+UP)}${ic('undo',ml(23))}${ic('caret',ml(10))}${ic('redo',ml(16))}${ic('caret',ml(9)+'opacity:.6')}</div>
 <doc-tab style="width:671px">${ic('cubel',ml(288)+UP)}${tx('无标题*',53,ml(4))}${ic('x',ml(286)+UP+'opacity:.8')}</doc-tab>
 <doc-tab active style="width:671px;margin-left:5px">${ic('cubed',ml(280)+UP)}${tx('无标题*(1)',71,ml(4))}${ic('x',ml(276)+UP)}</doc-tab>
 <div class="p">${ic('plus','padding-bottom:1px')}</div><div class="r">${ic('wrench',ml(15)+UP)}${ic('clock',ml(22)+UP)}${tx('1',6,ml(4))}${tx('Ayase Fujimaru',94,ml(39))}${ic('help',ml(34)+UP)}</div>`);

def('tool-group',':host{display:flex;box-sizing:border-box;flex-direction:column;flex:none;align-items:center;height:66px;border-right:1px solid #dadada}:host([last]){border:0}.i{display:flex;height:43px;align-items:flex-end;justify-content:center}.i>span{display:flex;justify-content:center;align-items:center;width:53.800px;height:42px}.l{display:flex;align-items:center;gap:5px;height:22px;margin-top:4px;font-size:13.500px;padding-right:3px}',
 e=>`<div class="i">${e.getAttribute('icons').split(' ').map(n=>`<span>${ic(n)}</span>`).join('')}</div><div class="l">${tx(e.getAttribute('label'),27)}${ic('caretd')}</div>`);

def('ribbon-bar',`:host{display:flex;box-sizing:border-box;flex:none;height:103px;background:#f1f1f1;border-bottom:2px solid #dedede}
.d{display:flex;width:106px;height:77px;margin:13px 0 0 27px;border:2px solid #dfdfdf;border-radius:5px;align-items:center;justify-content:center;gap:7px;font-weight:bold;font-size:14px;padding-bottom:2px}
.m{margin-left:23px}.t{display:flex;height:28px;padding-left:9px;font-size:13.500px}.t span{display:flex;justify-content:center;height:27px;padding-top:2px}.t .a{width:115px;color:#0696d7;border-bottom:4px solid #0696d7}.g{display:flex;margin-top:4px;height:67px}`,
`<div class="d">${tx('设计',28)}${ic('caretd')}</div><div class="m"><div class="t"><span class="a">${tx('基础特征实体',82)}</span><span style="margin-left:42px">${tx('基础特征曲面',82)}</span><span style="margin-left:60px">${tx('钣金',27)}</span><span style="margin-left:56px">${tx('工具',26)}</span></div>
<div class="g"><tool-group style="width:330px;padding-right:5px" icons="csketch extrude revolve hole pattern form" label="创建"></tool-group><tool-group style="width:336px;padding-left:1px" icons="press fillet shell combine split move" label="修改"></tool-group><tool-group style="width:121px" icons="assemble joint" label="装配"></tool-group><tool-group style="width:74px;padding-left:1px" icons="construct" label="构造"></tool-group><tool-group style="width:74px;padding-left:1px" icons="inspect" label="检验"></tool-group><tool-group style="width:74px;padding-left:1px" icons="insert" label="插入"></tool-group><tool-group last style="width:73px;padding-right:1px" icons="select" label="选择"></tool-group></div></div>`);

def('panel-bar',':host{display:flex;box-sizing:border-box;width:375px;height:31px;background:#f1f1f1;border:1px solid #bdbdbd;align-items:center;font-size:13.500px;color:#666;margin-left:5px;flex:none}.g{flex:1}',
 e=>`<span style="display:flex;width:31px;padding-left:6px">${e.hasAttribute('rew')?ic('rew'):''}</span>${tx(e.getAttribute('label'),e.getAttribute('tw'),UP)}<span class="g"></span>${ic(e.getAttribute('act'))}${ic('grip','margin:0 1px 0 8px')}`);

def('tree-row',':host{display:flex;height:30px;align-items:center;font-size:13.500px;color:#333}.e{display:flex;justify-content:flex-end;flex:none}.c{display:flex;height:25px;background:#f1f1f1;align-items:center;flex:none}.s{display:flex;align-items:center;width:108px;height:20px;background:#959595;color:#fff;font-weight:bold;padding-left:4px;margin-left:7px}',
 e=>{const a=n=>e.getAttribute(n),lv=+a('lv'),x=[50,73,95][lv],w=a('w'),icons=a('icons').split(' ');
 const ex=a('ex'),r=10;let s=`<span class="e" style="width:${x-r}px;margin-right:${r}px">${ex?ic(ex):''}</span>`;
 if(!lv)return s+`<div class="c" style="width:170px;padding-left:3px">${ic('eye')}<div class="s" style="margin-left:8px">${ic('body')}${tx('(未保存)',54,ml(17)+UP)}</div>${ic('target',ml(4)+'padding-top:1px')}</div>`;
 return s+`<div class="c" style="width:${w}px;padding-left:3px">${icons.map((n,i)=>ic(n,i?ml(11.5):'')).join('')}${tx(a('label'),a('tw'),ml(18)+UP)}</div>`});

def('model-scene',':host{display:block}svg{display:block}',()=>{
 let h='',v='';
 for(let k=-28;k<=34;k++){const x=856.700+k*31.560;v+=`<path d="M${x.toFixed(1)} 574V732" stroke="#000" stroke-opacity="${k%5?.05:.13}" stroke-width="${k%5?1.200:1.500}"/>`}
 for(let k=1;k<24;k++){const y=574+k*6.600;h+=`<path d="M0 ${y.toFixed(1)}H1920" stroke="#000" stroke-opacity=".035" stroke-width="1.300"/>`}
 h+='<path d="M0 618H1920M0 696.700H1920" stroke="#000" stroke-opacity=".07" stroke-width="1.500"/>';
 const st=[[0,'#cbcfc7'],[3,'#b9bdb7'],[5.5,'#abadaa'],[9,'#a7a8a4'],[12.5,'#989991'],[15.5,'#a2a39d'],[19.5,'#aeafaa'],[24,'#a9aaa4'],[30,'#acada8'],[38,'#a9a9a4'],[49,'#b1b1ab'],[58,'#adaca7'],[67,'#a7a6a0'],[75,'#b1b2ac'],[83.5,'#babbb6'],[86,'#b0b0ab'],[88,'#a5a7a3'],[94,'#aeb0ad'],[97,'#bbbeb7'],[100,'#cccfc5']].map(([o,c])=>`<stop offset="${o}%" stop-color="${c}"/>`).join('');
 return `<svg width="1920" height="796" viewBox="0 0 1920 796"><defs><linearGradient id="m">${st}</linearGradient><clipPath id="b"><rect y="574" width="1920" height="158"/></clipPath><radialGradient id="sh"><stop offset="0" stop-color="#555" stop-opacity=".7"/><stop offset="1" stop-color="#999" stop-opacity="0"/></radialGradient><linearGradient id="rl"><stop stop-color="#111"/><stop offset=".1" stop-color="#321a1c"/><stop offset=".25" stop-color="#7c4548"/><stop offset=".5" stop-color="#c99"/><stop offset=".75" stop-color="#7c4548"/><stop offset=".9" stop-color="#321a1c"/><stop offset="1" stop-color="#111"/></linearGradient></defs>
 <rect y="574" width="1920" height="158" fill="#b5b5b5"/>${h}${v}
 <path d="M0 574H1920M0 731.500H1920" stroke="#888" stroke-width="1.500"/><path d="M0 653H1920" stroke="#df8080" stroke-width="1.500"/>
 <path d="M620 652.500Q640 650.300 856.700 650T1093.500 652.500Q1070 655.500 856.700 655.300T620 652.500Z" fill="url(#rl)" stroke="#0c0c0e" stroke-width="2.200"/>
 <ellipse cx="856.700" cy="415.500" rx="236" ry="238.500" fill="#cfcfcd" stroke="#555" stroke-width="1"/>
 <path d="M780 655.200H930" stroke="#0c0c0e" stroke-width="2"/><path d="M826 653H888" stroke="#d8a5a5" stroke-width="1.300"/>
 <ellipse cx="856.700" cy="413" rx="236.700" ry="237" fill="url(#m)" stroke="#6b6b69" stroke-width="1.200"/>
 <g clip-path="url(#b)"><ellipse cx="856.700" cy="413" rx="236.300" ry="236.500" fill="#81807f" fill-opacity=".5"/></g>
 <path d="M674 574H1039" stroke="#858582" stroke-width="1.200"/>
 <path d="M856.700 574V732" stroke="#65cf65" stroke-width="1.500"/>
 <circle cx="856.700" cy="653.300" r="5" fill="#161818"/><path d="M852 651.500A5 5 0 0 1 861.500 651.500V653H852Z" fill="#6d7070"/>
 <ellipse cx="1846" cy="103" rx="42" ry="6" fill="url(#sh)"/>
 <defs><linearGradient id="vc" x2="1" y2="1"><stop stop-color="#f4f4f4"/><stop offset="1" stop-color="#dcdcdc"/></linearGradient></defs>
 <path d="M1819 41H1877L1879 101H1819Z" fill="url(#vc)"/><path d="M1820 41H1877.500V70L1879 101" fill="none" stroke="#aaa" stroke-dasharray="11 5" stroke-width="1.300"/>
 <rect x="1829" y="53" width="37" height="36" fill="#d8dbe0" opacity=".7"/>
 <text x="1833" y="82" font-family="Noto Sans CJK SC,sans-serif" font-size="32" font-weight="300" fill="#9a9fa6">前</text>
 <path d="M1818.500 32V102" stroke="#8f8ff2" stroke-width="2.200"/><path d="M1818 102H1888" stroke="#e35454" stroke-width="2.500"/>
 <g font-family="Liberation Sans,sans-serif" font-weight="bold"><text x="1813" y="29" font-size="16" fill="#9a9af5" textLength="10" lengthAdjust="spacingAndGlyphs">Z</text><text x="1892" y="107.500" font-size="17" fill="#fb8d8d" textLength="9" lengthAdjust="spacingAndGlyphs">X</text></g></svg>`});

def('nav-bar',':host{display:flex;box-sizing:border-box;width:316px;height:30px;background:#f1f1f1;align-items:center;padding-left:4px;flex:none;margin-top:2px}',
 [['orbit',0],['caretn',4],['look',8],['hand',12],['zoom',13],['fit',12],['caretn',7],['disp',17],['caretn',2],['gridi',7],['caretn',3],['views',8],['caretn',3]].map(([n,m])=>ic(n,ml(m))).join(''));

const rows=[[0,'open','','eye','',0],[1,'shut','文档设置','gear',107,54],[1,'shut','命名视图','folder',107,54],[1,'shut','原点','eyeoff folder',113,26],[1,'shut','实体','eye folder',113,26],[1,'open','画布','eye folder',113,26],[2,'','timg','eyeoff pic',109,24],[1,'open','草图','eye folder',113,26],[2,'','草图1','eye sklock',119,34],[2,'','草图3','eyeoff sk',119,34],[2,'','草图4','eye sklock',119,34],[2,'','草图5','eyeoff sk',119,34]];
def('work-view',':host{display:block;position:relative;flex:none;height:796px}model-scene{position:absolute;left:0;top:0}.o{position:relative;display:flex;flex-direction:column;height:796px;padding-top:4px}.t{display:flex;flex-direction:column;margin-top:4px}.b{display:flex;margin-top:auto;height:37px;gap:421px}',
 `<model-scene></model-scene><div class="o"><panel-bar rew label="浏览器" tw="40" act="minusc"></panel-bar><div class="t">${rows.map(r=>`<tree-row lv="${r[0]}" ex="${r[1]}" label="${r[2]}" icons="${r[3]}" w="${r[4]}" tw="${r[5]}"></tree-row>`).join('')}</div><div class="b"><panel-bar label="注释" tw="26" act="plusc" style="border-top:0"></panel-bar><nav-bar></nav-bar></div></div>`);

def('time-line',':host{display:flex;box-sizing:border-box;flex:none;height:62px;background:#f1f1f1;border-top:3px solid #cdcdcd;padding:0 17px 0 13px}.p{display:flex;gap:14px;margin-top:20px;width:169px}.f{width:245px}.r{display:flex;gap:10px;margin-top:18px;height:20px;align-items:center}.r fx-icon{width:20px}.k{display:flex;margin:4px 0 0 10px;border:solid #c8c8c8;border-width:0 2px 2px;width:213px;height:9px}.k i{width:30px;height:8px;border-right:2px solid #c8c8c8}.m{position:relative;left:-17px;margin-top:11px;height:41px}.g{flex:1}',
 `<div class="p">${[1,2,3,4,5].map(n=>ic('p'+n)).join('')}</div><div class="f"><div class="r">${['sk','tex','sk','tex','sk','tpic','sk','tex'].map(n=>ic(n)).join('')}</div><div class="k">${'<i></i>'.repeat(6)}</div></div><svg class="m" width="16" height="41"><path d="M0 0H15V6L9 12V40H6V12L0 6Z" fill="#686868"/></svg><span class="g"></span>${ic('gear2','margin-top:20px')}`);

def('task-button',':host{display:flex;box-sizing:border-box;flex:none;height:50px;align-items:center;color:#fff;font:15.500px "Noto Sans","Noto Sans CJK SC",sans-serif;border-bottom:3px solid transparent;padding-top:3px}:host([run]){border-color:#ffafb4}',
 e=>ic(e.getAttribute('icon'))+(e.hasAttribute('label')?tx(e.getAttribute('label'),e.getAttribute('tw'),ml(+e.getAttribute('gap'))):''));
const tb=(icon,w,m,pl,label,tw,gap,css='')=>`<task-button icon="${icon}" ${label?`run label="${label}" tw="${tw}" gap="${gap}"`:''} style="width:${w}px;margin-left:${m}px;padding-left:${pl}px;${css}"></task-button>`;
def('task-bar',':host{display:flex;flex:none;height:50px;background:linear-gradient(90deg,#1f1e28 0,#251d2b 220px,#2a1c2d 430px,#241c2a 600px,#322626 730px,#2e1a31 800px,#2b1a2e 870px,#2d2930 940px,#26242e 1000px,#272630 1130px,#3a302f 1250px,#54202a 1560px,#45262d 1650px,#2f2833 1740px,#2e2532 1820px,#492642 1910px);color:#fff;align-items:center;font:15px "Noto Sans",sans-serif}.c{display:flex;flex-direction:column;align-items:center;width:76px;margin-left:22px;font-size:15px;line-height:22px;padding-top:1px}.s{margin-left:13px;width:1px;height:50px;background:#786a75}',
 tb('win',40,0,20)+tb('sticky',60,20,20)+tb('chrome',141,6,7,'github_百...',82,5)+tb('edge',50,9,10)+tb('note',50,7,10)+tb('store',50,7,10)+tb('mail',44,10,6)+tb('fold',140,11,11,'May. 28',58,11)+tb('fold',140,10,11,'docs',35,11)+tb('fold',140,10,11,'Bandicam',70,11)+tb('ppt',141,10,7,'Discussion....',91,5)+tb('quad',141,10,6,'秃优化与学...',86,4)+tb('f360',150,6,11,'Autodesk F...',93,4,'background:linear-gradient(90deg,#6a5a58,#745254)')+tb('rec',150,1,12,'Bandicam',70,5,'background:#b7622a;border-color:#ff7800')
 +ic('up',ml(11))+ic('qq',ml(14))+ic('spk',ml(14))+ic('kbd',ml(9))+tx('英',17,ml(10)+'font:bold 16px Noto Sans CJK SC;padding-bottom:1px')+ic('sogou',ml(18))+`<div class="c">${tx('0:24',31)}${tx('2020/5/23',74)}</div>`+ic('notif','margin:6px 0 0 23px')+'<span class="s"></span>');

def('fusion-app',':host{display:flex;flex-direction:column;width:1920px;height:1080px;overflow:hidden}','<title-bar></title-bar><quick-bar></quick-bar><ribbon-bar></ribbon-bar><work-view></work-view><time-line></time-line><task-bar></task-bar>');

/* Text of a given width: the letter spacing takes up the difference. */
def('fit-text',':host{display:block;flex:none;white-space:pre}span{display:inline-block}','<span><slot></slot></span>',e=>{
 const s=e.shadowRoot.querySelector('span'),w=+e.getAttribute('w'),n=[...e.textContent].length;
 const d=(w-s.getBoundingClientRect().width)/n;s.style.letterSpacing=d.toFixed(3)+'px';e.style.width=w+'px'});
</script>
</body>
</html>
